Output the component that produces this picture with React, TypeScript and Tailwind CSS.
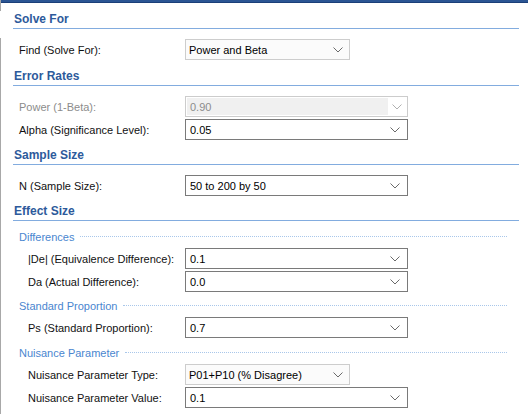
import React from "react";

const Chevron = ({ light }: { light?: boolean }) => (
  <svg width="10" height="6" viewBox="0 0 10 6" className="shrink-0">
    <polyline points="0.5,0.5 5,5 9.5,0.5" fill="none" stroke={light ? "#b0b0b0" : "#6a6a6a"} strokeWidth="1" />
  </svg>
);

const SectionHeader = ({ title, pt }: { title: string; pt: string }) => (
  <div className={`${pt} pl-[12px] pr-[9px]`}>
    <div className="h-[16px] pl-[1px] text-[12px] leading-[16px] font-bold text-[#2d5a9b]">{title}</div>
    <div className="mt-[1px] h-[1px] bg-[#82acdf]" />
  </div>
);

const SubHeader = ({ title, pt }: { title: string; pt: string }) => (
  <div className={`${pt} flex items-center h-[16px] box-content pl-[18px] pr-[21px]`}>
    <span className="text-[11px] leading-[16px] text-[#4a86cf] whitespace-nowrap">{title}</span>
    <div className="ml-[6px] flex-1 border-t border-dotted border-[#a9c7ea] mt-[-1px]" />
  </div>
);

type Kind = "combo" | "edit" | "disabled";

const Box = ({ value, kind, wide }: { value: string; kind: Kind; wide: boolean }) => {
  const w = wide ? "w-[223px]" : "w-[165px]";
  if (kind === "disabled") {
    return (
      <div className={`${w} h-[21px] border border-[#cccccc] bg-white flex p-[1px]`}>
        <div className="flex-1 bg-[#f0f0f0] flex items-center pl-[3px] text-[#8c8c8c]">{value}</div>
        <div className="w-[18px] flex items-center justify-center">
          <Chevron light />
        </div>
      </div>
    );
  }
  if (kind === "combo") {
    return (
      <div className={`${w} h-[21px] border border-[#cdcdcd] bg-[#fbfbfb] flex items-center pl-[3px] pr-[6px]`}>
        <div className="flex-1 text-black">{value}</div>
        <Chevron />
      </div>
    );
  }
  return (
    <div className={`${w} h-[21px] border border-[#7a7a7a] bg-white flex items-center pl-[4px] pr-[7px]`}>
      <div className="flex-1 text-black">{value}</div>
      <Chevron />
    </div>
  );
};

const Row = ({
  label,
  value,
  kind = "edit",
  wide = true,
  indent = false,
  mt,
  disabled,
}: {
  label: string;
  value: string;
  kind?: Kind;
  wide?: boolean;
  indent?: boolean;
  mt: string;
  disabled?: boolean;
}) => (
  <div className={`${mt} flex items-center h-[21px]`}>
    <div
      className={`${indent ? "pl-[27px]" : "pl-[18px]"} w-[184px] whitespace-nowrap ${
        disabled ? "text-[#8c8c8c]" : "text-[#111]"
      }`}
    >
      {label}
    </div>
    <Box value={value} kind={kind} wide={wide} />
  </div>
);

export default function App() {
  return (
    <div
      className="w-[528px] h-[414px] overflow-hidden bg-white flex text-[11px] leading-[16px]"
      style={{ fontFamily: '"Liberation Sans", Arial, sans-serif' }}
    >
      <div className="w-[1px] flex flex-col shrink-0">
        <div className="h-[11px] bg-[#a8a8a8]" />
        <div className="h-[27px]" />
        <div className="flex-1 bg-[#a8a8a8]" />
      </div>
      <div className="flex-1 flex flex-col">
        <div className="h-[3px] bg-[#2b5593] border-b border-[#1b3f78]" />
        <SectionHeader title="Solve For" pt="pt-[8px]" />
        <Row mt="mt-[10px]" label="Find (Solve For):" value="Power and Beta" kind="combo" wide={false} />
        <SectionHeader title="Error Rates" pt="pt-[8px]" />
        <Row mt="mt-[10px]" label="Power (1-Beta):" value="0.90" kind="disabled" disabled />
        <Row mt="mt-[2px]" label="Alpha (Significance Level):" value="0.05" />
        <SectionHeader title="Sample Size" pt="pt-[7px]" />
        <Row mt="mt-[10px]" label="N (Sample Size):" value="50 to 200 by 50" />
        <SectionHeader title="Effect Size" pt="pt-[7px]" />
        <SubHeader title="Differences" pt="pt-[8px]" />
        <Row mt="mt-[3px]" indent label="|De| (Equivalence Difference):" value="0.1" />
        <Row mt="mt-[2px]" indent label="Da (Actual Difference):" value="0.0" />
        <SubHeader title="Standard Proportion" pt="pt-[6px]" />
        <Row mt="mt-[3px]" indent label="Ps (Standard Proportion):" value="0.7" />
        <SubHeader title="Nuisance Parameter" pt="pt-[7px]" />
        <Row mt="mt-[3px]" indent label="Nuisance Parameter Type:" value="P01+P10 (% Disagree)" kind="combo" wide={false} />
        <Row mt="mt-[2px]" indent label="Nuisance Parameter Value:" value="0.1" />
      </div>
    </div>
  );
}
